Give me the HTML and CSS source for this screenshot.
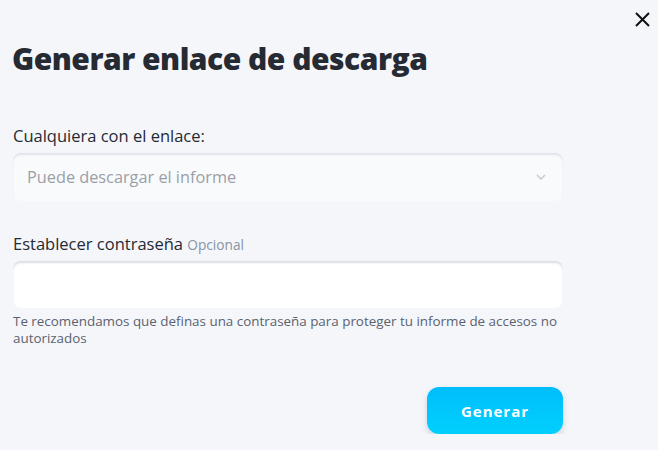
FILE: index.html
```html
<!DOCTYPE html>
<html lang="es">
<head>
    <meta charset="UTF-8">
    <meta name="viewport" content="width=device-width, initial-scale=1.0">
    <title>Generar enlace de descarga</title>
    <link rel="stylesheet" href="styles.css">
</head>
<body>
    <div id="modal">
        <button class="close" aria-label="Cerrar">
            <svg width="15" height="15" viewBox="0 0 15 15"><path d="M1 1L14 14M14 1L1 14" stroke="#111" stroke-width="2" fill="none"/></svg>
        </button>
        <h1 class="title">Generar enlace de descarga</h1>

        <div class="field">
            <label class="label">Cualquiera con el enlace:</label>
            <div class="select">
                <span>Puede descargar el informe</span>
                <svg width="10" height="6" viewBox="0 0 10 6"><path d="M1 1L5 5L9 1" stroke="#c9ccd3" stroke-width="1.6" fill="none"/></svg>
            </div>
        </div>

        <div class="field">
            <label class="label">Establecer contraseña <span class="optional">Opcional</span></label>
            <input type="password" class="input">
            <p class="help">Te recomendamos que definas una contraseña para proteger tu informe de accesos no autorizados</p>
        </div>

        <div class="actions">
            <button class="btn-primary">Generar</button>
        </div>
    </div>
</body>
</html>
```

FILE: styles.css
```css
body {
    margin: 0;
    background-color: #f5f6fa;
    font-family: "Open Sans", "Liberation Sans", sans-serif;
    color: #252a33;
}
#modal {
    position: relative;
    width: 550px;
    padding: 0 13px;
}
.close {
    position: absolute;
    top: 12px;
    left: 635px;
    padding: 0;
    border: none;
    background: none;
    cursor: pointer;
    line-height: 0;
}
.title {
    margin: 0 0 0 -1px;
    padding-top: 39px;
    font-size: 30px;
    font-weight: 800;
    letter-spacing: -0.5px;
    line-height: 40px;
}
.field {
    margin-top: 45px;
}
.field + .field {
    margin-top: 31px;
}
.label {
    display: block;
    font-size: 16.5px;
    line-height: 24px;
    margin-bottom: 5px;
}
.optional {
    font-size: 13.7px;
    line-height: 1;
    color: #8595a5;
}
.select {
    display: flex;
    justify-content: space-between;
    align-items: center;
    box-sizing: border-box;
    height: 48px;
    padding: 0 17px 0 14px;
    border-radius: 8px;
    background-color: #f9fafc;
    box-shadow: inset 0 2px 2px rgba(180, 186, 200, 0.35);
    font-size: 16.3px;
    color: #9a9fa7;
}
.input {
    display: block;
    box-sizing: border-box;
    width: 100%;
    height: 47px;
    border: none;
    border-radius: 8px;
    background-color: #fff;
    box-shadow: inset 0 2px 2px rgba(160, 170, 185, 0.4);
    outline: none;
}
.help {
    margin: 5px 0 0;
    font-size: 13.4px;
    line-height: 17px;
    color: #5a6270;
}
.actions {
    display: flex;
    justify-content: flex-end;
    margin-top: 40px;
}
.btn-primary {
    width: 136px;
    height: 47px;
    border: none;
    border-radius: 12px;
    background: linear-gradient(#00bdfc, #00d0fd);
    box-shadow: 0 3px 6px rgba(60, 80, 110, 0.22);
    color: #fff;
    font-family: "Open Sans", "Liberation Sans", sans-serif;
    font-size: 15px;
    font-weight: 700;
    letter-spacing: 1px;
    cursor: pointer;
}
```
